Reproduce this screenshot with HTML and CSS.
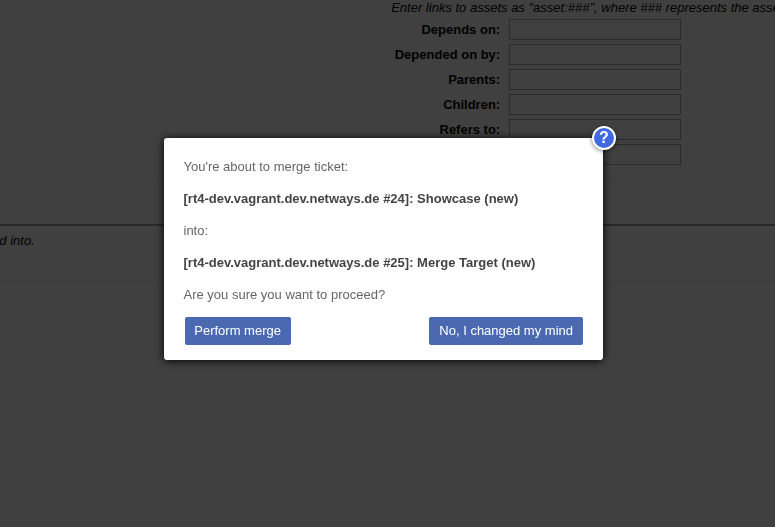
FILE: index.html
```html
<!DOCTYPE html>
<html lang="en">
<head>
<meta charset="utf-8">
<title>Merge ticket</title>
<link rel="stylesheet" href="styles.css">
</head>
<body>
<main class="page">
  <section class="links">
    <p class="hint">Enter links to assets as "asset:###", where ### represents the asset ID.</p>
    <div class="row"><label for="a">Depends on:</label><input id="a"></div>
    <div class="row"><label for="b">Depended on by:</label><input id="b"></div>
    <div class="row"><label for="c">Parents:</label><input id="c"></div>
    <div class="row"><label for="d">Children:</label><input id="d"></div>
    <div class="row"><label for="e">Refers to:</label><input id="e"></div>
    <div class="row"><label for="f"></label><input id="f"></div>
  </section>
  <div class="spacer"></div>
  <section class="merge"><p>d into.</p></section>
</main>
<div class="overlay">
  <div class="dialog" role="dialog">
    <span class="help">?</span>
    <p>You're about to merge ticket:</p>
    <p><strong>[rt4-dev.vagrant.dev.netways.de #24]: Showcase (new)</strong></p>
    <p>into:</p>
    <p><strong>[rt4-dev.vagrant.dev.netways.de #25]: Merge Target (new)</strong></p>
    <p>Are you sure you want to proceed?</p>
    <div class="actions">
      <button type="button">Perform merge</button>
      <button type="button">No, I changed my mind</button>
    </div>
  </div>
</div>
</body>
</html>
```
FILE: styles.css
```css
* { box-sizing: border-box; }
html, body { height: 100%; overflow: hidden; }
body {
  margin: 0;
  background: #404040;
  color: #000;
  font: 13px/16px "Liberation Sans", Arial, sans-serif;
}
p { margin: 0; }
.links { height: 178px; border-bottom: 1px solid #3c3c3c; }
.hint { padding-left: 391.2px; height: 17px; font-style: italic; white-space: nowrap; }
.row { display: flex; align-items: center; height: 25px; }
.row label { width: 500.2px; text-align: right; font-weight: bold; }
.row input {
  width: 172px;
  height: 21px;
  margin: 0 0 0 8.8px;
  padding: 0;
  border: 1px solid #2b2b2b;
  border-radius: 0;
  background: #404040;
}
.spacer { height: 46px; }
.merge {
  height: 59px;
  padding-top: 7px;
  border-top: 2px solid #292929;
  border-bottom: 1px solid #3c3c3c;
  font-style: italic;
}
.merge p { margin-left: -.7px; }
.overlay {
  position: fixed;
  inset: 0;
  display: flex;
  justify-content: center;
  align-items: flex-start;
  padding: 138px 8px 0 0;
}
.dialog {
  position: relative;
  width: 439px;
  height: 222px;
  padding: 21px 20px 0 19.5px;
  border-radius: 3px;
  background: #fff;
  box-shadow: 0 1px 8px #000;
  color: #666;
}
.dialog p { margin-bottom: 16px; }
.dialog strong { color: #444; }
.actions {
  display: flex;
  justify-content: space-between;
  margin-top: -2px;
  padding-left: 1.5px;
}
.actions button {
  height: 28px;
  padding: 0 10px;
  border: 0;
  border-radius: 2px;
  background: #4a69b0;
  color: #fff;
  font: inherit;
}
.actions button:first-child { width: 106px; padding: 0 10px 0 9.2px; white-space: nowrap; }
.help {
  position: absolute;
  top: -12px;
  right: -13px;
  width: 24px;
  height: 24px;
  border: 2px solid #fff;
  border-radius: 50%;
  background: #4169e1;
  box-shadow: 0 1px 4px rgba(0, 0, 0, .5);
  color: #fff;
  font: bold 16px/19px "Liberation Sans", Arial, sans-serif;
  text-align: center;
}
```
